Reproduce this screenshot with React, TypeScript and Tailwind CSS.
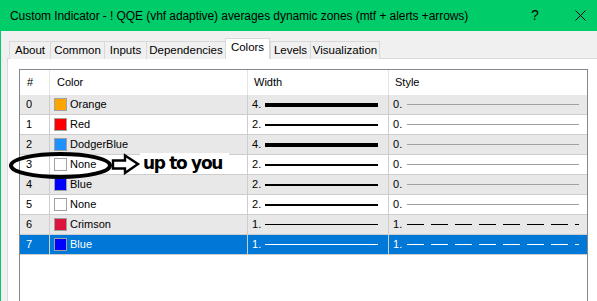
import React from 'react'

type Row = {
  id: number
  name: string
  swatch: string
  width: number
  style: number
}

const rows: Row[] = [
  { id: 0, name: 'Orange', swatch: '#ffa500', width: 4, style: 0 },
  { id: 1, name: 'Red', swatch: '#ff0000', width: 2, style: 0 },
  { id: 2, name: 'DodgerBlue', swatch: '#1e90ff', width: 4, style: 0 },
  { id: 3, name: 'None', swatch: '#ffffff', width: 2, style: 0 },
  { id: 4, name: 'Blue', swatch: '#0000ff', width: 2, style: 0 },
  { id: 5, name: 'None', swatch: '#ffffff', width: 2, style: 0 },
  { id: 6, name: 'Crimson', swatch: '#dc143c', width: 1, style: 1 },
  { id: 7, name: 'Blue', swatch: '#0000ff', width: 1, style: 1 },
]

const tabs = [
  { label: 'About', w: 'w-[41px]' },
  { label: 'Common', w: 'w-[54px]' },
  { label: 'Inputs', w: 'w-[42px]' },
  { label: 'Dependencies', w: 'w-[79px]' },
  { label: 'Colors', w: 'w-[45px]', active: true },
  { label: 'Levels', w: 'w-[40px]' },
  { label: 'Visualization', w: 'w-[70px]', last: true },
]

function TitleBar() {
  return (
    <div className="flex h-[31px] items-center bg-[#00cc6a] pl-[9px] text-[12px] text-black">
      <span className="flex-1 whitespace-nowrap tracking-[-0.07px]">
        Custom Indicator - ! QQE (vhf adaptive) averages dynamic zones (mtf + alerts +arrows)
      </span>
      <span className="w-[12px] text-center text-[14px]">?</span>
      <svg width="11" height="11" viewBox="0 0 11 11" className="ml-[34px] mr-[11px]">
        <path d="M0.5 0.5 L10.5 10.5 M10.5 0.5 L0.5 10.5" stroke="#000" strokeWidth="1" />
      </svg>
    </div>
  )
}

function Tabs() {
  return (
    <div className="relative z-10 -mb-px flex items-end pl-[8px] pt-[7px] text-[11.5px]">
      {tabs.map((t) =>
        t.active ? (
          <div
            key={t.label}
            className={`${t.w} flex h-[21px] items-center justify-center border-x border-t border-[#d9d9d9] bg-white pb-[2px]`}
          >
            {t.label}
          </div>
        ) : (
          <div
            key={t.label}
            className={`${t.w} flex h-[18px] items-center justify-center border-t border-l border-[#d9d9d9] bg-[#f0f0f0] ${t.last ? 'border-r' : ''}`}
          >
            {t.label}
          </div>
        )
      )}
    </div>
  )
}

function WidthLine({ w, color }: { w: number; color: string }) {
  const h = w === 4 ? 'h-[4px]' : w === 2 ? 'h-[2px]' : 'h-px'
  return <div className={`ml-auto mr-[10px] w-[113px] ${h}`} style={{ backgroundColor: color }} />
}

function StyleLine({ style, color }: { style: number; color: string }) {
  if (style === 0) {
    return <div className="ml-auto mr-[8px] h-px w-[172px] bg-[#a0a0a0]" />
  }
  return (
    <svg width="172" height="1" className="ml-auto mr-[8px]">
      <line x1="0" y1="0.5" x2="172" y2="0.5" stroke={color} strokeWidth="1" strokeDasharray="17 7" />
    </svg>
  )
}

function ListRow({ row }: { row: Row }) {
  const selected = row.id === 7
  const bg = selected ? 'bg-[#0078d7] text-white' : row.id % 2 === 0 ? 'bg-[#e8e8e8]' : 'bg-white'
  const ink = selected ? '#ffffff' : '#000000'
  return (
    <div className={`flex h-[20px] border-b border-[#cdcdcd] ${bg}`}>
      <div className="flex w-[30px] items-center border-r border-[#cdcdcd] pl-[6px]">{row.id}</div>
      <div className="flex w-[198px] items-center border-r border-[#cdcdcd] pl-[4px]">
        <span
          className="mr-[3px] h-[13px] w-[13px] border border-[#a0a0a0]"
          style={{ backgroundColor: row.swatch }}
        />
        {row.name}
      </div>
      <div className="flex w-[141px] items-center border-r border-[#cdcdcd] pl-[4px]">
        <span>{row.width}.</span>
        <WidthLine w={row.width} color={ink} />
      </div>
      <div className="flex flex-1 items-center pl-[4px]">
        <span>{row.style}.</span>
        <StyleLine style={row.style} color={ink} />
      </div>
    </div>
  )
}

function ColorList() {
  return (
    <div className="h-[260px] w-[569px] border border-[#828790] bg-white text-[11px]">
      <div className="flex h-[25px] bg-white">
        <div className="flex w-[30px] items-center border-r border-[#e5e5e5] pl-[7px]">#</div>
        <div className="flex w-[198px] items-center border-r border-[#e5e5e5] pl-[7px]">Color</div>
        <div className="flex w-[141px] items-center border-r border-[#e5e5e5] pl-[6px]">Width</div>
        <div className="flex flex-1 items-center pl-[6px]">Style</div>
      </div>
      {rows.map((r) => (
        <ListRow key={r.id} row={r} />
      ))}
    </div>
  )
}

function Annotation() {
  return (
    <div className="absolute left-0 top-[150px] h-[32px] w-[240px]">
      <svg width="240" height="32" className="absolute left-0 top-0">
        <ellipse cx="59.5" cy="15.5" rx="49.5" ry="11.5" fill="none" stroke="#000" strokeWidth="4" />
        <polygon
          points="112,10.5 124,10.5 124,5.5 137,14 124,23 124,18.5 112,18.5"
          fill="#fff"
          stroke="#000"
          strokeWidth="2.4"
        />
      </svg>
      <div className="absolute left-[139px] top-[3px] flex h-[21px] w-[89px] items-center bg-white pl-[3px] font-['DejaVu_Sans',sans-serif] text-[17px] font-bold tracking-[-1.3px] text-black">
        up to you
      </div>
    </div>
  )
}

export default function App() {
  return (
    <div className="relative h-[301px] w-[597px] overflow-hidden border-l border-[#00cc6a] bg-[#f0f0f0] font-['Liberation_Sans',Arial,sans-serif] text-black">
      <TitleBar />
      <Tabs />
      <div className="ml-[6px] h-[300px] border-t border-l border-[#d9d9d9] bg-white pl-[11px] pt-[10px]">
        <ColorList />
      </div>
      <Annotation />
    </div>
  )
}
